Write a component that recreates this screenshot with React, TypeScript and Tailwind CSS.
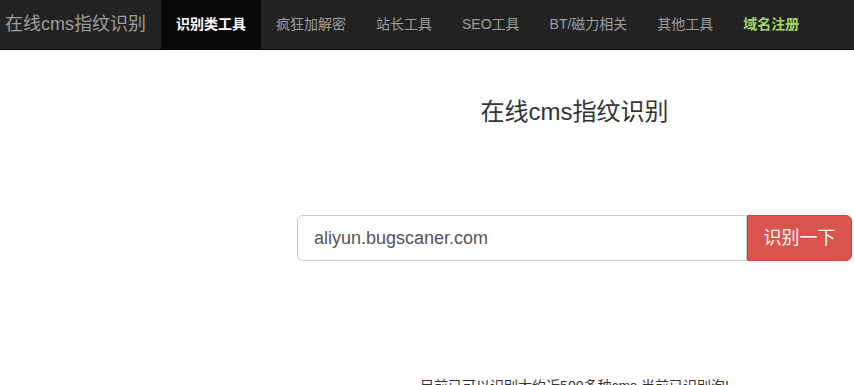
const navItems = [
  { label: "识别类工具", active: true },
  { label: "疯狂加解密" },
  { label: "站长工具" },
  { label: "SEO工具" },
  { label: "BT/磁力相关" },
  { label: "其他工具" },
  { label: "域名注册", green: true },
];

const cjk = { fontFamily: '"Liberation Sans", "Noto Sans CJK SC", sans-serif' };

export default function App() {
  return (
    <div className="min-h-screen bg-white text-[#333]" style={cjk}>
      {/* Navbar */}
      <nav className="flex h-[50px] items-stretch bg-[#222] border-b border-[#080808]">
        <a className="flex items-center pl-[5px] pr-[15px] text-[18px] text-[#9d9d9d]">在线cms指纹识别</a>
        <ul className="flex items-stretch">
          {navItems.map((item) => (
            <li
              key={item.label}
              className={
                item.active
                  ? "flex items-center px-[15px] bg-[#080808] text-white text-[14px] font-bold"
                  : item.green
                    ? "flex items-center px-[15px] text-[#a5d46e] text-[14px] font-bold"
                    : "flex items-center px-[15px] text-[#9d9d9d] text-[14px]"
              }
            >
              {item.label}
            </li>
          ))}
        </ul>
      </nav>

      {/* Content column */}
      <div className="flex">
        <div className="w-[297px] shrink-0"></div>
        <div className="flex flex-1 flex-col pr-[2px]">
          <h1 className="mt-[49px] text-center text-[24px] leading-[26px] text-[#333]">在线cms指纹识别</h1>

          <div className="mt-[90px] flex h-[46px]">
            <input
              className="h-full flex-1 rounded-l-[6px] border border-[#ccc] px-4 text-[18px] text-[#555] outline-none"
              defaultValue="aliyun.bugscaner.com"
            />
            <button className="h-full w-[105px] rounded-r-[6px] border border-[#d43f3a] bg-[#d9534f] text-[18px] text-white">
              识别一下
            </button>
          </div>

          <p className="mt-[115px] text-center text-[14px] leading-[20px] text-[#333]">
            目前已可以识别大约近500多种cms,当前已识别泡!
          </p>
        </div>
      </div>
    </div>
  );
}
